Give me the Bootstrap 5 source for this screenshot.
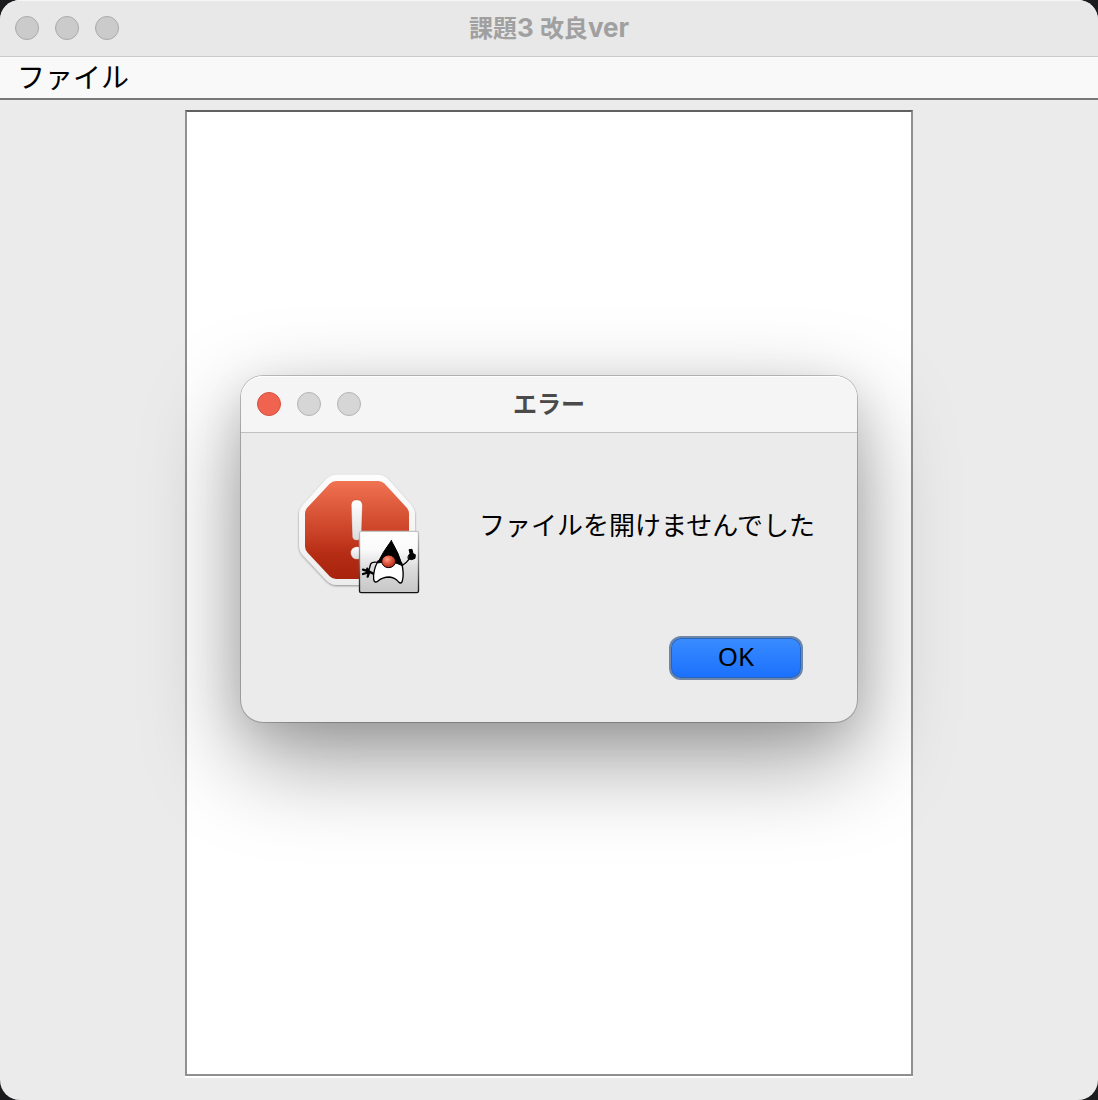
<!DOCTYPE html>
<html lang="ja">
<head>
<meta charset="utf-8">
<meta name="viewport" content="width=device-width, initial-scale=1">
<title>課題3 改良ver</title>
<link href="https://cdn.jsdelivr.net/npm/bootstrap@5.3.0/dist/css/bootstrap.min.css" rel="stylesheet">
<style>
  body { background: #1b1b1d; color: #000; font-family: "Noto Sans", "Noto Sans CJK JP", sans-serif; }
  .app-window { background: #ebebeb; border-radius: 20px; }
  .title-strip { height: 57px; padding: 0 15px; border-bottom: 1px solid #cbcbcb; }
  .app-window > .title-strip { background: #e8e8e8; box-shadow: inset 0 1px #f6f6f6; }
  .title-text { margin: 0; font: bold 24px/54px "Noto Sans CJK JP", sans-serif; color: #4a4a4a; }
  .title-text span { font-family: Inter, sans-serif; font-size: 26px; }
  .app-window > .title-strip .title-text { color: #a0a0a0; }
  .light { width: 24px; height: 24px; padding: 0; border: 1px solid #b4b4b4; border-radius: 50%; background: #d6d6d6; }
  .app-window > .title-strip .light { border-color: #a9a9a9; background: #cbcbcb; }
  .light.light-close { border-color: #d6503e; background: #f0644f; }
  .menu-strip { height: 43px; background: #f9f9f9; border-bottom: 2px solid #787878; padding: 0 17px; }
  .menu-strip button { font: 28px/38px "Noto Sans CJK JP", sans-serif; color: #000; }
  .canvas-area { padding: 10px 0 24px; }
  .text-pane { width: 728px; max-width: 100%; resize: none; border: 2px solid #909090; border-top-color: #606060; background: #fff; box-shadow: 0 2px #fff; outline: 0; }
  .alert-window { width: 616px; max-width: 100%; background: #ebebeb; border-radius: 22px; top: 549px; left: 50%; transform: translate(-50%, -50%);
    box-shadow: 0 0 0 1px rgba(0,0,0,.22), 0 36px 96px rgba(0,0,0,.4), 0 12px 40px rgba(0,0,0,.1); }
  .alert-window .title-strip { padding: 0 16px; background: #f5f5f5; border-color: #c0c0c0; border-radius: 22px 22px 0 0; box-shadow: inset 0 1px #fff; }
  .alert-content { padding: 37px 42px 42px 54px; }
  .alert-content p { font: 26px/40px "Noto Sans CJK JP", sans-serif; padding-top: 34px; }
  .ok-row { padding: 36px 12px 0 0; }
  .ok-button { width: 134px; height: 44px; padding: 0 0 4px; border: 2px solid #6e87a8; border-radius: 12px; color: #000;
    background: linear-gradient(#3a8cff, #1a70fc); font: 26px/36px "Noto Sans", sans-serif; box-shadow: inset 0 0 0 1px #2a65bd; }
</style>
<script src="https://cdn.jsdelivr.net/npm/bootstrap@5.3.0/dist/js/bootstrap.bundle.min.js"></script>
</head>
<body>
<div class="app-window position-relative d-flex flex-column min-vh-100 overflow-hidden">
  <header class="title-strip d-flex align-items-center position-relative">
    <div class="d-flex" style="gap:16px">
      <button class="light" aria-label="閉じる"></button>
      <button class="light" aria-label="しまう"></button>
      <button class="light" aria-label="拡大"></button>
    </div>
    <h1 class="title-text position-absolute top-0 start-0 w-100 text-center pe-none">課題<span>3 </span>改良<span>ver</span></h1>
  </header>
  <nav class="menu-strip"><button class="border-0 bg-transparent p-0">ファイル</button></nav>
  <main class="canvas-area flex-grow-1 d-flex justify-content-center">
    <textarea class="text-pane" aria-label="テキスト"></textarea>
  </main>

  <section class="alert-window position-absolute" role="alertdialog" aria-labelledby="alertTitle" aria-describedby="alertText">
    <header class="title-strip d-flex align-items-center position-relative">
      <div class="d-flex" style="gap:16px">
        <button class="light light-close" aria-label="閉じる"></button>
        <button class="light" aria-label="しまう" disabled></button>
        <button class="light" aria-label="拡大" disabled></button>
      </div>
      <h2 class="title-text position-absolute top-0 start-0 w-100 text-center pe-none" id="alertTitle">エラー</h2>
    </header>
    <div class="alert-content">
      <div class="d-flex justify-content-between">
        <svg width="130" height="130" viewBox="30 30 390 390" aria-hidden="true">
          <defs>
            <linearGradient id="red" x1="0" y1="0" x2="0" y2="1"><stop offset="0" stop-color="#f07352"/><stop offset=".5" stop-color="#cc4429"/><stop offset=".75" stop-color="#b52c14"/><stop offset="1" stop-color="#a8230d"/></linearGradient>
            <linearGradient id="rim" x1="0" y1="0" x2="0" y2="1"><stop offset="0" stop-color="#fdfdfd"/><stop offset="1" stop-color="#ececec"/></linearGradient>
            <linearGradient id="mark" x1="0" y1="0" x2="0" y2="1"><stop offset="0" stop-color="#fff"/><stop offset="1" stop-color="#dcdcdc"/></linearGradient>
            <linearGradient id="tile" x1="0" y1="0" x2="0" y2="1"><stop offset="0" stop-color="#fff"/><stop offset=".3" stop-color="#fafafa"/><stop offset=".6" stop-color="#dcdcdc"/><stop offset="1" stop-color="#c6c6c6"/></linearGradient>
            <linearGradient id="edge" x1="0" y1="0" x2="0" y2="1"><stop offset="0" stop-color="#c4c4c4"/><stop offset=".55" stop-color="#6d6d6d"/><stop offset="1" stop-color="#111"/></linearGradient>
            <radialGradient id="nose" cx=".4" cy=".35" r=".65"><stop offset="0" stop-color="#f8a08d"/><stop offset=".5" stop-color="#e4573e"/><stop offset="1" stop-color="#a82c18"/></radialGradient>
            <filter id="soft" x="-10%" y="-10%" width="120%" height="125%"><feDropShadow dx="0" dy="3" stdDeviation="3" flood-opacity=".4"/></filter>
          </defs>
          <path filter="url(#soft)" fill="url(#rim)" d="M156 44H277Q296 44 309 57L376 132Q390 146 390 165V255Q390 274 376 288L309 361Q296 375 277 375H156Q137 375 124 361L56 288Q42 274 42 255V165Q42 146 56 132L124 57Q137 44 156 44Z"/>
          <path fill="url(#red)" d="M153 63H280Q291 63 299 71L364 142Q372 150 372 161V259Q372 270 364 278L299 349Q291 357 280 357H153Q142 357 134 349L68 278Q60 270 60 259V161Q60 150 68 142L134 71Q142 63 153 63Z"/>
          <g fill="url(#mark)" stroke="#a33622" stroke-opacity=".35" stroke-width="2">
            <path d="M199 136Q199 120 215 120T232 136L229 229Q227 241 215 241T202 229Z"/>
            <ellipse cx="216" cy="279" rx="19" ry="19"/>
          </g>
          <rect x="223.500" y="214" width="177" height="184" rx="5" fill="url(#tile)" stroke="url(#edge)" stroke-width="4"/>
          <g stroke="#000" stroke-linejoin="round" stroke-linecap="round">
            <path fill="none" stroke-width="4" d="M284 308Q259 303 256 315L251 334M350 318Q365 308 377 292"/>
            <path fill="none" stroke-width="7" d="M250 334L234 329M251 337L234 342M252 338L248 350M254 335L265 341M251 334L247 326"/>
            <path fill="#000" stroke-width="3" d="M370 288L375 280L372 269L381 268L384 281L391 284L390 295L380 299L370 296Z"/>
            <path fill="#fff" stroke-width="4" d="M279 303C267 325 265 347 266 358Q268 370 278 364Q292 351 313 351Q329 352 340 365Q349 374 352 363Q358 342 350 309Z"/>
            <path fill="#000" stroke-width="3" d="M319 242Q292 278 278 309Q291 305 310 306Q334 306 352 317Q342 280 319 242Z"/>
            <ellipse cx="311" cy="304" rx="21" ry="19" fill="url(#nose)" stroke-width="3"/>
          </g>
        </svg>
        <p class="mb-0" id="alertText">ファイルを開けませんでした</p>
      </div>
      <div class="ok-row d-flex justify-content-end"><button class="ok-button">OK</button></div>
    </div>
  </section>
</div>
</body>
</html>
